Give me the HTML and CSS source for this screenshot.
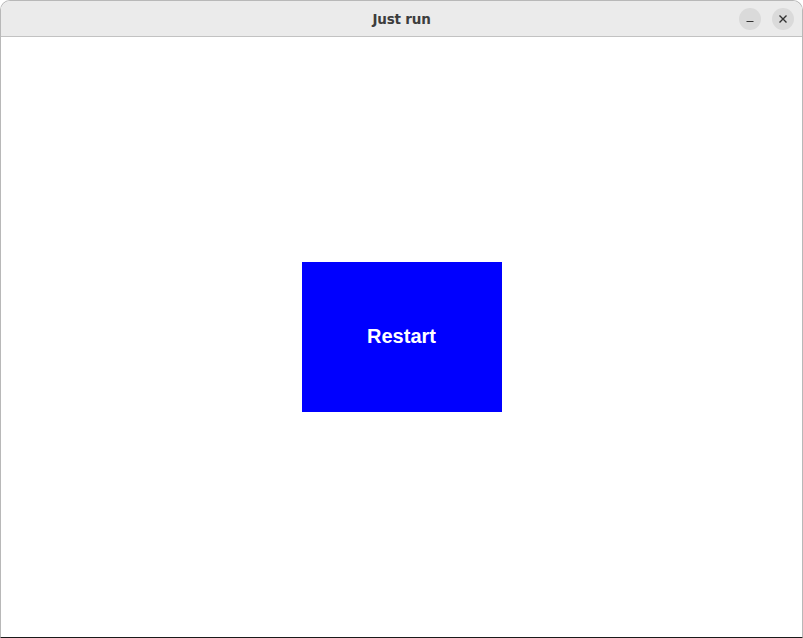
FILE: index.html
```html
<!DOCTYPE html>
<html>
<head>
<meta charset="utf-8">
<title>Just run</title>
<link rel="stylesheet" href="styles.css">
</head>
<body>
<div class="window">
  <div class="titlebar">
    <div class="title">Just run</div>
    <div class="controls">
      <div class="ctl">
        <svg width="10" height="10" viewBox="0 0 10 10"><path d="M1.5 7.5h7" stroke="#333" stroke-width="1.2"/></svg>
      </div>
      <div class="ctl">
        <svg width="10" height="10" viewBox="0 0 10 10"><path d="M1.5 1.5l7 7M8.5 1.5l-7 7" stroke="#333" stroke-width="1.4"/></svg>
      </div>
    </div>
  </div>
  <div class="content">
    <div class="restart">Restart</div>
  </div>
</div>
</body>
</html>
```
FILE: styles.css
```css
html, body {
  margin: 0;
  padding: 0;
  background: #ffffff;
}
body {
  width: 803px;
  height: 638px;
  overflow: hidden;
}
.window {
  width: 803px;
  height: 638px;
  box-sizing: border-box;
  border: 1px solid #b8b8b8;
  border-bottom: 1px solid #1a1a1a;
  border-radius: 10px 10px 0 0;
  display: flex;
  flex-direction: column;
  overflow: hidden;
  background: #fff;
}
.titlebar {
  height: 35px;
  flex: 0 0 35px;
  background: #ebebeb;
  border-bottom: 1px solid #c2c2c2;
  display: flex;
  align-items: center;
  justify-content: center;
  position: relative;
}
.title {
  font-family: "DejaVu Sans", sans-serif;
  font-weight: bold;
  font-size: 13.5px;
  color: #3d3d3d;
  letter-spacing: -0.2px;
}
.controls {
  position: absolute;
  right: 8px;
  top: 7px;
  display: flex;
  gap: 11px;
}
.ctl {
  width: 22px;
  height: 22px;
  border-radius: 50%;
  background: #dadada;
  display: flex;
  align-items: center;
  justify-content: center;
}
.content {
  flex: 1;
  display: flex;
  align-items: center;
  justify-content: center;
  background: #fff;
}
.restart {
  width: 200px;
  height: 150px;
  box-sizing: border-box;
  padding-bottom: 2px;
  background: #0000ff;
  color: #ffffff;
  font-family: "Liberation Sans", Arial, sans-serif;
  font-weight: bold;
  font-size: 20px;
  display: flex;
  align-items: center;
  justify-content: center;
}
```
